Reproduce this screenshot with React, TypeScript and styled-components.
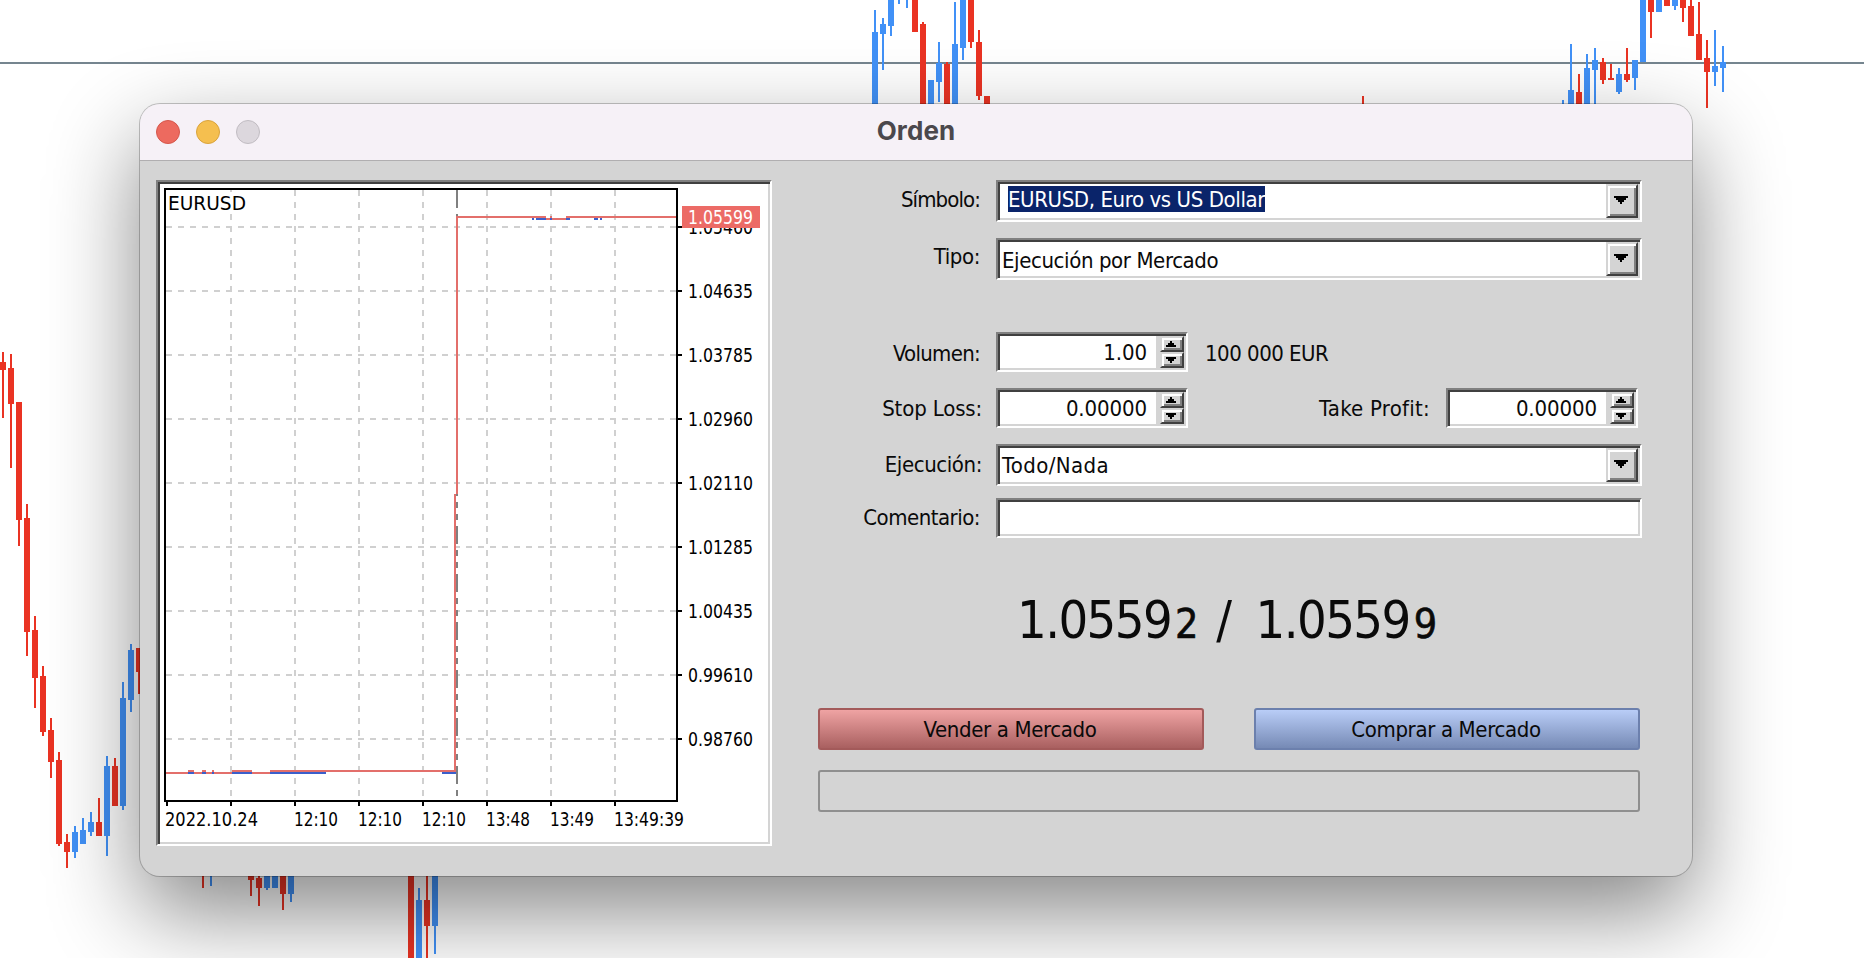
import React, { useState } from 'react';
import styled, { createGlobalStyle } from 'styled-components';

const GlobalStyle = createGlobalStyle`
  * {
    box-sizing: border-box;
  }
  body {
    margin: 0;
    background: #ffffff;
    overflow: hidden;
    font-family: 'DejaVu Sans Condensed', 'DejaVu Sans', Tahoma, sans-serif;
    font-stretch: condensed;
  }
`;

// Background chart: [x, wick top, wick bottom, body top, body bottom, up]
type Candle = [number, number, number, number, number, boolean];

const candles: Candle[] = [
  [0, 352, 418, 362, 370, false],
  [8, 354, 468, 368, 404, false],
  [16, 402, 546, 402, 520, false],
  [24, 504, 656, 518, 632, false],
  [32, 616, 708, 630, 678, false],
  [40, 666, 736, 676, 732, false],
  [48, 718, 778, 730, 762, false],
  [56, 752, 846, 760, 844, false],
  [64, 834, 868, 842, 852, false],
  [72, 826, 858, 832, 852, true],
  [80, 818, 844, 830, 844, true],
  [88, 812, 836, 822, 832, true],
  [96, 798, 836, 822, 836, false],
  [104, 756, 856, 766, 836, true],
  [112, 758, 806, 766, 806, false],
  [120, 682, 810, 698, 806, true],
  [128, 644, 712, 650, 700, true],
  [136, 648, 694, 648, 672, false],
  [200, 860, 888, 860, 870, false],
  [208, 860, 886, 860, 870, true],
  [248, 860, 896, 860, 880, false],
  [256, 860, 906, 878, 888, false],
  [264, 860, 890, 860, 888, true],
  [272, 860, 888, 860, 888, true],
  [280, 860, 910, 860, 894, false],
  [288, 860, 902, 860, 894, true],
  [408, 860, 958, 860, 958, false],
  [416, 888, 958, 900, 958, true],
  [424, 860, 958, 900, 926, false],
  [432, 860, 954, 860, 926, true],
  [872, 10, 110, 32, 110, true],
  [880, 18, 70, 24, 34, true],
  [888, 0, 36, 0, 26, true],
  [896, 0, 4, 0, 0, true],
  [904, 0, 8, 0, 0, true],
  [912, 0, 32, 0, 32, false],
  [920, 22, 110, 24, 110, false],
  [928, 80, 110, 80, 110, true],
  [936, 42, 102, 63, 82, true],
  [944, 62, 110, 64, 110, false],
  [952, 2, 110, 44, 110, true],
  [960, 0, 60, 0, 48, true],
  [968, 0, 48, 0, 42, false],
  [976, 30, 100, 42, 96, false],
  [984, 96, 110, 96, 110, false],
  [1360, 96, 110, 108, 110, false],
  [1560, 100, 110, 108, 110, true],
  [1568, 44, 110, 90, 110, true],
  [1576, 74, 110, 92, 110, false],
  [1584, 54, 110, 68, 110, true],
  [1592, 48, 110, 60, 70, true],
  [1600, 58, 84, 62, 80, false],
  [1608, 64, 80, 78, 80, false],
  [1616, 68, 94, 74, 92, true],
  [1624, 48, 82, 74, 80, false],
  [1632, 60, 90, 60, 78, true],
  [1640, 0, 62, 0, 62, true],
  [1648, 0, 38, 0, 12, false],
  [1656, 0, 12, 0, 12, true],
  [1664, 0, 6, 0, 6, false],
  [1672, 0, 10, 0, 6, true],
  [1680, 0, 22, 0, 8, false],
  [1688, 0, 36, 6, 36, false],
  [1696, 2, 60, 34, 60, false],
  [1704, 40, 108, 58, 72, false],
  [1712, 30, 86, 66, 72, true],
  [1720, 46, 92, 62, 68, true],
];

const Desktop = styled.div`
  position: relative;
  width: 1864px;
  height: 958px;
  padding: 104px 0 0 140px;
  overflow: hidden;
`;

const CandleCanvas = styled.svg`
  position: absolute;
  inset: 0;
`;

const Window = styled.section`
  position: relative;
  display: flex;
  flex-direction: column;
  width: 1552px;
  height: 772px;
  border-radius: 20px;
  background: #d4d4d4;
  overflow: hidden;
  box-shadow: 0 0 0 1px rgba(0, 0, 0, 0.22), 0 36px 90px rgba(0, 0, 0, 0.48);
`;

const TitleBar = styled.header`
  display: grid;
  grid-template-columns: 1fr auto 1fr;
  align-items: center;
  height: 57px;
  padding: 0 16px;
  background: #f6f1f7;
  border-bottom: 1px solid #b0aeb0;
`;

const Lights = styled.div`
  display: flex;
  gap: 16px;
`;

const Light = styled.span<{ $color: string; $edge: string }>`
  width: 24px;
  height: 24px;
  border-radius: 50%;
  background: ${(p) => p.$color};
  border: 1px solid ${(p) => p.$edge};
`;

const Title = styled.h1`
  margin: 0 0 2px;
  font-family: Inter, 'Liberation Sans', sans-serif;
  font-size: 26px;
  font-weight: 700;
  line-height: 32px;
  letter-spacing: 0.1px;
  color: #4b484c;
`;

const Body = styled.div`
  display: flex;
  flex: 1;
  gap: 46px;
  padding: 19px 50px 0 16px;
`;

// Classic two-step sunken border
const Sunken = styled.div`
  display: flex;
  background: #ffffff;
  border: 2px solid;
  border-color: #808080 #ffffff #ffffff #808080;
  box-shadow: inset 2px 2px 0 #404040, inset -2px -2px 0 #d4d4d4;
`;

const ChartPanel = styled(Sunken)`
  width: 616px;
  height: 666px;
`;

const ChartSvg = styled.svg`
  margin: -2px;
  font-size: 19px;
`;

const Form = styled.form`
  display: flex;
  flex-direction: column;
  width: 824px;
  font-size: 22px;
  line-height: 26px;
  letter-spacing: -0.43px;
  color: #0a0a0a;
`;

const Row = styled.div<{ $gap?: number }>`
  display: flex;
  align-items: flex-start;
  margin-bottom: ${(p) => p.$gap ?? 16}px;
`;

const Label = styled.label<{ $width: number; $drop: number; $inset?: number; $track?: number }>`
  width: ${(p) => p.$width}px;
  padding-top: ${(p) => p.$drop}px;
  padding-right: ${(p) => p.$inset ?? 16}px;
  text-align: right;
  white-space: nowrap;
  letter-spacing: ${(p) => p.$track ?? -0.6}px;
`;

const Note = styled.span`
  padding: 9px 0 0 17px;
  letter-spacing: -0.5px;
`;

const Combo = styled(Sunken)`
  width: 646px;
  height: 42px;
  padding: 2px;
`;

const ComboText = styled.span<{ $drop: number; $track?: number }>`
  flex: 1;
  padding: ${(p) => p.$drop}px 0 0 2px;
  white-space: nowrap;
  letter-spacing: ${(p) => p.$track ?? -0.4}px;
`;

const Selected = styled.span`
  display: inline-block;
  height: 26px;
  margin-left: 6px;
  line-height: 28px;
  background: #0a246a;
  color: #ffffff;
`;

const Raised = styled.button`
  display: flex;
  align-items: center;
  justify-content: center;
  padding: 0;
  background: #d4d4d4;
  border: 2px solid;
  border-color: #d4d4d4 #404040 #404040 #d4d4d4;
  box-shadow: inset 2px 2px 0 #ffffff, inset -2px -2px 0 #808080;
`;

const DropButton = styled(Raised)`
  width: 32px;
  height: 34px;
  padding: 0 2px 2px 0;
`;

const Spin = styled(Sunken)`
  width: 192px;
  height: 40px;
  padding: 2px;
`;

const SpinInput = styled.input`
  flex: 1;
  min-width: 0;
  height: 32px;
  padding: 0 9px 0 0;
  border: 0;
  outline: 0;
  background: transparent;
  font: inherit;
  letter-spacing: -0.1px;
  color: inherit;
  text-align: right;
`;

const SpinButtons = styled.div`
  display: flex;
  flex-direction: column;
  width: 28px;
  padding-left: 4px;
  background: #d4d4d4;
`;

const SpinButton = styled(Raised)`
  height: 16px;
  padding: 0 2px 0 0;
`;

const Comment = styled(Sunken).attrs({ as: 'input' })`
  width: 646px;
  height: 40px;
  padding: 2px 6px;
  outline: 0;
  font: inherit;
`;

const Quote = styled.div`
  display: flex;
  align-items: baseline;
  height: 62px;
  margin: 51px 0 57px;
  padding-left: 199px;
  font-size: 52px;
  line-height: 62px;
  letter-spacing: -1.6px;
  white-space: pre;
`;

const Pip = styled.small`
  margin-left: 4px;
  font-size: 41px;
  -webkit-text-stroke: 0.6px #0a0a0a;
`;

const Slash = styled.span`
  padding: 0 12px 0 6px;
`;

const Actions = styled.div`
  display: flex;
  gap: 50px;
  margin-bottom: 20px;
`;

const OrderButton = styled.button<{ $side: 'sell' | 'buy' }>`
  width: 386px;
  height: 42px;
  padding: 2px 2px 0 0;
  border: 2px solid ${(p) => (p.$side === 'sell' ? '#a35a5a' : '#6c80ad')};
  border-radius: 3px;
  background: ${(p) =>
    p.$side === 'sell'
      ? 'linear-gradient(#efa3a3, #a96060)'
      : 'linear-gradient(#b9cdf7, #768ab5)'};
  font: inherit;
  letter-spacing: -0.35px;
  color: #0a0a0a;
`;

const StatusBox = styled.div`
  width: 822px;
  height: 42px;
  border: 2px solid #8f8f8f;
  border-radius: 3px;
`;

const DownArrow = ({ size }: { size: number }) => (
  <svg width={size} height={size / 2 + 1} shapeRendering="crispEdges">
    {Array.from({ length: (size + 2) / 4 }, (_, i) => (
      <rect key={i} x={i * 2} y={i * 2} width={size - i * 4} height={2} />
    ))}
  </svg>
);

const UpArrow = ({ size }: { size: number }) => (
  <svg width={size} height={size / 2 + 1} shapeRendering="crispEdges">
    {Array.from({ length: (size + 2) / 4 }, (_, i) => (
      <rect key={i} x={i * 2} y={size / 2 - 1 - i * 2} width={size - i * 4} height={2} />
    ))}
  </svg>
);

const prices = ['1.05460', '1.04635', '1.03785', '1.02960', '1.02110', '1.01285', '1.00435', '0.99610', '0.98760'];

const times: [number, string, number][] = [
  [9, '2022.10.24', 93],
  [138, '12:10', 44],
  [202, '12:10', 44],
  [266, '12:10', 44],
  [330, '13:48', 44],
  [394, '13:49', 44],
  [458, '13:49:39', 70],
];

const askTicks = [
  [376, 2], [380, 10], [394, 2], [410, 4], [438, 4], [444, 2],
];

const bidTicks = [
  [32, 6], [46, 4], [56, 2], [76, 20], [114, 56], [286, 14],
];

const TickChart = () => (
  <ChartSvg width={616} height={666} shapeRendering="crispEdges">
    <g stroke="#d0d0d0" strokeWidth={2} strokeDasharray="6 6">
      {prices.map((p, i) => (
        <line key={p} x1={10} x2={520} y1={47 + i * 64} y2={47 + i * 64} />
      ))}
      {[0, 1, 2, 3, 4, 5, 6].map((i) => (
        <line key={i} x1={75 + i * 64} x2={75 + i * 64} y1={10} y2={620} />
      ))}
    </g>
    <line x1={301} x2={301} y1={10} y2={620} stroke="#808080" strokeWidth={2} strokeDasharray="18 6 6 6 6 6" />
    <rect x={10} y={12} width={82} height={22} fill="#ffffff" />

    <g fill="#e36f6b">
      <rect x={10} y={592} width={104} height={2} />
      <rect x={114} y={590} width={186} height={2} />
      <rect x={298} y={314} width={2} height={278} />
      <rect x={300} y={36} width={2} height={278} />
      <rect x={300} y={36} width={90} height={2} />
      <rect x={390} y={38} width={20} height={2} />
      <rect x={410} y={36} width={110} height={2} />
    </g>
    <g fill="#3b5fcb">
      {askTicks.map(([x, w]) => (
        <rect key={x} x={x} y={38} width={w} height={2} />
      ))}
      {bidTicks.map(([x, w]) => (
        <rect key={x} x={x} y={592} width={w} height={2} />
      ))}
    </g>
    <g fill="#e36f6b">
      {bidTicks.map(([x, w]) => (
        <rect key={x} x={x} y={590} width={w} height={2} />
      ))}
      <rect x={394} y={36} width={2} height={2} />
    </g>

    <rect x={9} y={9} width={512} height={612} fill="none" stroke="#000000" strokeWidth={2} />
    {prices.map((p, i) => (
      <g key={p}>
        <rect x={522} y={46 + i * 64} width={4} height={2} />
        <text x={532} y={54 + i * 64} textLength={65} lengthAdjust="spacingAndGlyphs">{p}</text>
      </g>
    ))}
    {[10, 74, 138, 202, 266, 330, 394, 458].map((x) => (
      <rect key={x} x={x} y={622} width={2} height={4} />
    ))}
    {times.map(([x, label, w]) => (
      <text key={x} x={x} y={645.5} textLength={w} lengthAdjust="spacingAndGlyphs">{label}</text>
    ))}
    <text x={12} y={30} textLength={78} lengthAdjust="spacingAndGlyphs">EURUSD</text>

    <rect x={526} y={26} width={78} height={22} fill="#ec6b66" />
    <text x={532} y={44} fill="#ffffff" textLength={65} lengthAdjust="spacingAndGlyphs">1.05599</text>
  </ChartSvg>
);

const Spinner = ({ initial }: { initial: string }) => {
  const [value, setValue] = useState(initial);
  return (
    <Spin>
      <SpinInput value={value} onChange={(e) => setValue(e.target.value)} />
      <SpinButtons>
        <SpinButton type="button"><UpArrow size={10} /></SpinButton>
        <SpinButton type="button"><DownArrow size={10} /></SpinButton>
      </SpinButtons>
    </Spin>
  );
};

const App: React.FC = () => {
  return (
    <Desktop>
      <GlobalStyle />
      <CandleCanvas width={1864} height={958} shapeRendering="crispEdges">
        <rect x={0} y={62} width={1864} height={2} fill="#75858f" />
        {candles.map(([x, high, low, top, bottom, up]) => (
          <g key={x} fill={up ? '#4191f7' : '#ea3323'}>
            <rect x={x + 2} y={high} width={2} height={low - high} />
            <rect x={x} y={top} width={6} height={bottom - top} />
          </g>
        ))}
      </CandleCanvas>

      <Window>
        <TitleBar>
          <Lights>
            <Light $color="#ed6a5f" $edge="#d5574c" />
            <Light $color="#f5bf4f" $edge="#d9a33c" />
            <Light $color="#dcd7dd" $edge="#c1bcc2" />
          </Lights>
          <Title>Orden</Title>
        </TitleBar>

        <Body>
          <ChartPanel>
            <TickChart />
          </ChartPanel>

          <Form>
            <Row>
              <Label $width={178} $drop={7} $track={-0.9}>Símbolo:</Label>
              <Combo>
                <ComboText $drop={2}><Selected>EURUSD, Euro vs US Dollar</Selected></ComboText>
                <DropButton type="button"><DownArrow size={14} /></DropButton>
              </Combo>
            </Row>
            <Row $gap={52}>
              <Label $width={178} $drop={6} $track={-0.4}>Tipo:</Label>
              <Combo>
                <ComboText $drop={6}>Ejecución por Mercado</ComboText>
                <DropButton type="button"><DownArrow size={14} /></DropButton>
              </Combo>
            </Row>
            <Row>
              <Label $width={178} $drop={9} $track={-0.7}>Volumen:</Label>
              <Spinner initial="1.00" />
              <Note>100 000 EUR</Note>
            </Row>
            <Row>
              <Label $width={178} $drop={8} $inset={14} $track={-0.15}>Stop Loss:</Label>
              <Spinner initial="0.00000" />
              <Label $width={258} $drop={8} $track={0.25}>Take Profit:</Label>
              <Spinner initial="0.00000" />
            </Row>
            <Row $gap={12}>
              <Label $width={178} $drop={8} $inset={14} $track={-0.4}>Ejecución:</Label>
              <Combo>
                <ComboText $drop={5} $track={0.4}>Todo/Nada</ComboText>
                <DropButton type="button"><DownArrow size={14} /></DropButton>
              </Combo>
            </Row>
            <Row $gap={0}>
              <Label $width={178} $drop={7} $track={-0.5}>Comentario:</Label>
              <Comment />
            </Row>

            <Quote>
              <span>1.0559</span><Pip>2</Pip>
              <Slash> / </Slash>
              <span>1.0559</span><Pip>9</Pip>
            </Quote>

            <Actions>
              <OrderButton type="button" $side="sell">Vender a Mercado</OrderButton>
              <OrderButton type="button" $side="buy">Comprar a Mercado</OrderButton>
            </Actions>
            <StatusBox />
          </Form>
        </Body>
      </Window>
    </Desktop>
  );
};

export default App;
